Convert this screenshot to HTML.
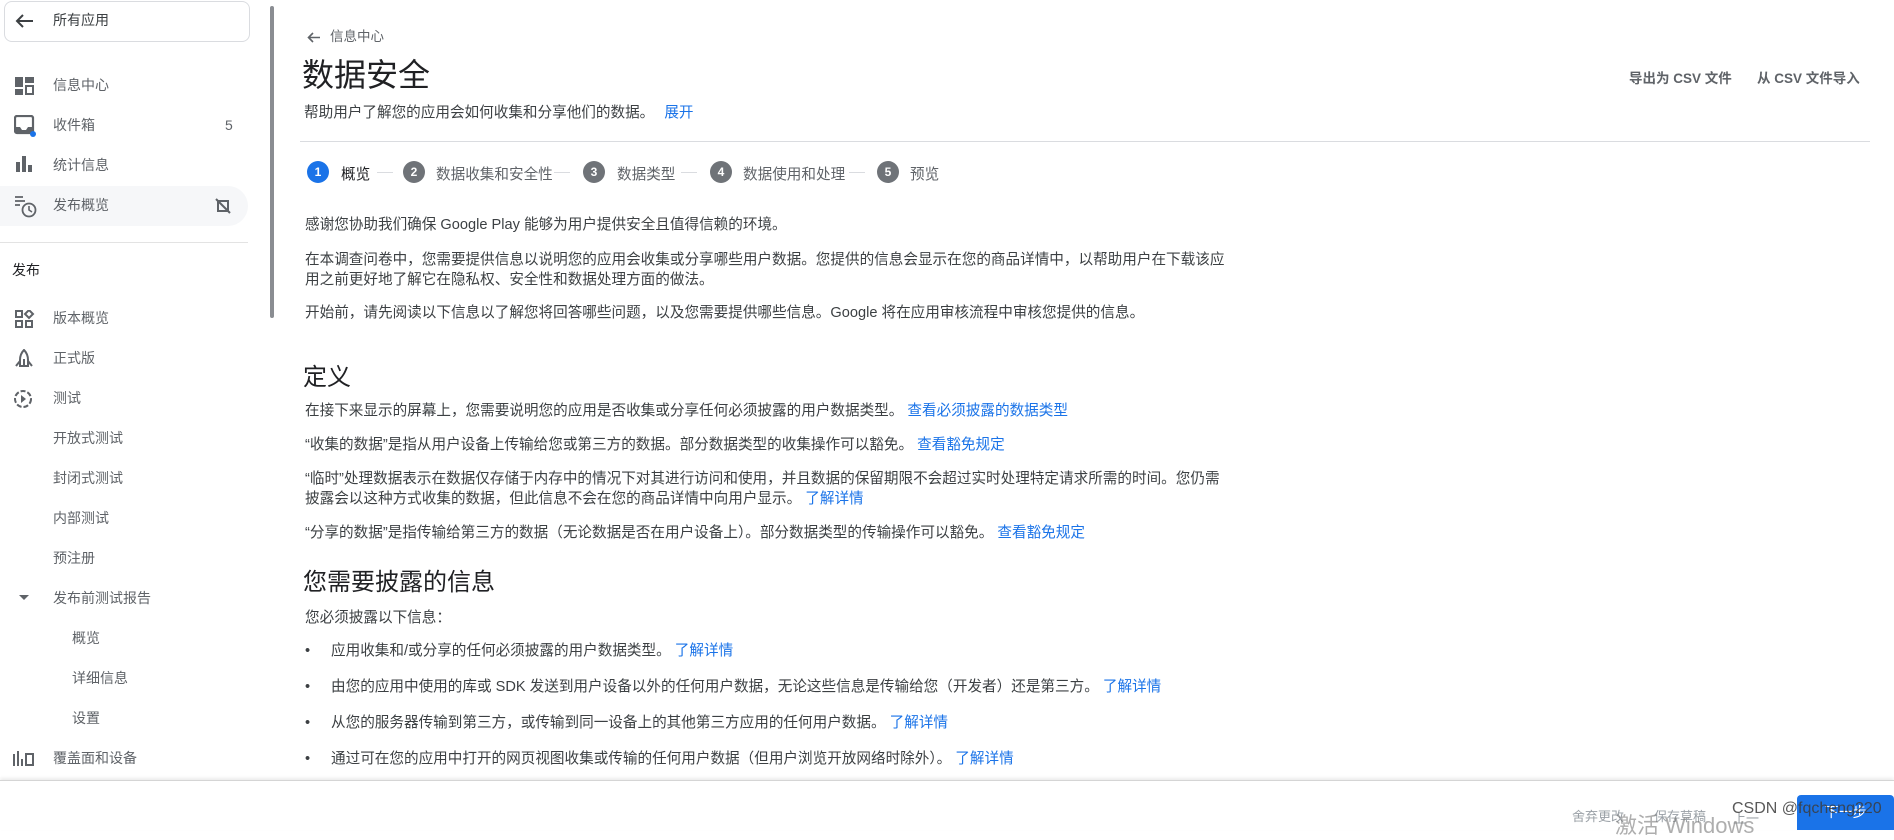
<!DOCTYPE html>
<html><head><meta charset="utf-8"><style>
*{margin:0;padding:0;box-sizing:border-box}
body{width:1894px;height:830px;overflow:hidden;background:#fff;font-family:"Liberation Sans","Noto Sans CJK SC",sans-serif;color:#3c4043;position:relative}
.a{position:absolute;white-space:nowrap}
.s{font-size:14px;color:#5f6368;line-height:18px}
.t{font-size:14.6px;color:#3c4043;line-height:18px}
.l{color:#1a73e8}
.ic{position:absolute}
.step{position:absolute;top:161px;width:22px;height:22px;border-radius:50%;background:#6f7378;color:#fff;font-size:12px;font-weight:bold;text-align:center;line-height:22px}
.sl{position:absolute;top:163px;font-size:14.6px;color:#5f6368}
.dash{position:absolute;top:172px;height:1px;width:16px;background:#dadce0}
</style></head><body>
<!-- sidebar -->
<div class="a" style="left:4px;top:1px;width:246px;height:41px;border:1px solid #dadce0;border-radius:8px"></div>
<svg class="ic" style="left:14px;top:13px" width="20" height="16" viewBox="0 0 20 16"><path d="M19 8H3M9 2L3 8l6 6" stroke="#3c4043" stroke-width="2" fill="none"/></svg>
<div class="a t" style="left:53px;top:11px;font-size:14px">所有应用</div>

<svg class="ic" style="left:15px;top:77px" width="20" height="18" viewBox="0 0 20 18"><rect x="0" y="0" width="8" height="10" fill="#5f6368"/><rect x="0" y="12" width="8" height="6" fill="#5f6368"/><rect x="10" y="0" width="9" height="6" fill="#5f6368"/><rect x="11" y="9" width="7" height="8" fill="none" stroke="#5f6368" stroke-width="2"/></svg>
<div class="a s" style="left:53px;top:76px">信息中心</div>
<svg class="ic" style="left:14px;top:115px" width="22" height="22" viewBox="0 0 22 22"><rect x="1" y="1" width="18" height="17" rx="2" fill="none" stroke="#5f6368" stroke-width="2.2"/><path d="M1 12h5l2 3h4l2-3h5v6H1z" fill="#5f6368"/><circle cx="19" cy="19" r="3" fill="#1a73e8"/></svg>
<div class="a s" style="left:53px;top:116px">收件箱</div>
<div class="a s" style="left:225px;top:116px">5</div>
<svg class="ic" style="left:16px;top:156px" width="18" height="16" viewBox="0 0 18 16"><rect x="0" y="6" width="4" height="10" fill="#5f6368"/><rect x="6" y="0" width="4" height="16" fill="#5f6368"/><rect x="12" y="9" width="4" height="7" fill="#5f6368"/></svg>
<div class="a s" style="left:53px;top:156px">统计信息</div>
<div class="a" style="left:0;top:186px;width:248px;height:40px;background:#f6f7f9;border-radius:0 20px 20px 0"></div>
<svg class="ic" style="left:14px;top:195px" width="24" height="24" viewBox="0 0 24 24"><path d="M1 2h8M1 6h10M1 10h5" stroke="#5f6368" stroke-width="1.8"/><circle cx="15" cy="15" r="6.5" fill="none" stroke="#5f6368" stroke-width="1.8"/><path d="M15 11v4l3 2" stroke="#5f6368" stroke-width="1.6" fill="none"/></svg>
<div class="a s" style="left:53px;top:196px">发布概览</div>
<svg class="ic" style="left:215px;top:198px" width="16" height="16" viewBox="0 0 16 16"><path d="M3 3h10v10H3z" fill="none" stroke="#5f6368" stroke-width="2"/><path d="M1 1l14 14" stroke="#5f6368" stroke-width="2"/></svg>
<div class="a" style="left:0;top:242px;width:248px;height:1px;background:#e3e3e3"></div>
<div class="a t" style="left:12px;top:261px;color:#202124;font-size:14px">发布</div>

<svg class="ic" style="left:15px;top:310px" width="20" height="18" viewBox="0 0 20 18"><rect x="1" y="1" width="6" height="6" fill="none" stroke="#5f6368" stroke-width="2"/><rect x="1" y="11" width="6" height="6" fill="none" stroke="#5f6368" stroke-width="2"/><rect x="11" y="11" width="6" height="6" fill="none" stroke="#5f6368" stroke-width="2"/><path d="M14 0l4 4-4 4-4-4z" fill="none" stroke="#5f6368" stroke-width="2"/></svg>
<div class="a s" style="left:53px;top:309px">版本概览</div>
<svg class="ic" style="left:15px;top:349px" width="18" height="18" viewBox="0 0 18 18"><path d="M9 1c3 3 4 6 4 10v6H5v-6C5 7 6 4 9 1zM1 17l4-5M17 17l-4-5M9 10v7" fill="none" stroke="#5f6368" stroke-width="2"/></svg>
<div class="a s" style="left:53px;top:349px">正式版</div>
<svg class="ic" style="left:13px;top:389px" width="20" height="20" viewBox="0 0 20 20"><circle cx="10" cy="10" r="8" fill="none" stroke="#5f6368" stroke-width="2" stroke-dasharray="5 2"/><path d="M8 6l5 4-5 4z" fill="#5f6368"/></svg>
<div class="a s" style="left:53px;top:389px">测试</div>
<div class="a s" style="left:53px;top:429px">开放式测试</div>
<div class="a s" style="left:53px;top:469px">封闭式测试</div>
<div class="a s" style="left:53px;top:509px">内部测试</div>
<div class="a s" style="left:53px;top:549px">预注册</div>
<svg class="ic" style="left:19px;top:595px" width="10" height="6" viewBox="0 0 10 6"><path d="M0 0h10L5 5z" fill="#5f6368"/></svg>
<div class="a s" style="left:53px;top:589px">发布前测试报告</div>
<div class="a s" style="left:72px;top:629px">概览</div>
<div class="a s" style="left:72px;top:669px">详细信息</div>
<div class="a s" style="left:72px;top:709px">设置</div>
<svg class="ic" style="left:13px;top:751px" width="22" height="15" viewBox="0 0 22 15"><rect x="0" y="3" width="2" height="12" fill="#5f6368"/><rect x="4" y="0" width="2" height="15" fill="#5f6368"/><rect x="8" y="8" width="2" height="7" fill="#5f6368"/><rect x="13" y="3" width="7" height="11" fill="none" stroke="#5f6368" stroke-width="2"/></svg>
<div class="a s" style="left:53px;top:749px">覆盖面和设备</div>
<div class="a" style="left:270px;top:6px;width:4px;height:312px;background:#8a8d92;border-radius:2px"></div>

<!-- main header -->
<svg class="ic" style="left:307px;top:32px" width="13" height="11" viewBox="0 0 13 11"><path d="M13 5.5H2M6 1L1.5 5.5 6 10" stroke="#5f6368" stroke-width="1.6" fill="none"/></svg>
<div class="a s" style="left:330px;top:28px;font-size:13.5px">信息中心</div>
<div class="a" style="left:302px;top:54px;font-size:32px;line-height:42px;color:#202124">数据安全</div>
<div class="a t" style="left:304px;top:104px">帮助用户了解您的应用会如何收集和分享他们的数据。 <span class="l" style="margin-left:6px">展开</span></div>
<div class="a s" style="left:1629px;top:70px;font-size:13.5px;font-weight:bold;color:#5f6368">导出为 CSV 文件</div>
<div class="a s" style="left:1757px;top:70px;font-size:13.5px;font-weight:bold;color:#5f6368">从 CSV 文件导入</div>
<div class="a" style="left:300px;top:141px;width:1570px;height:1px;background:#dadce0"></div>

<!-- stepper -->
<div class="step" style="left:307px;background:#1a73e8">1</div><div class="sl" style="left:341px;color:#202124">概览</div><div class="dash" style="left:377px"></div>
<div class="step" style="left:403px">2</div><div class="sl" style="left:436px">数据收集和安全性</div><div class="dash" style="left:554px"></div>
<div class="step" style="left:583px">3</div><div class="sl" style="left:617px">数据类型</div><div class="dash" style="left:681px"></div>
<div class="step" style="left:710px">4</div><div class="sl" style="left:743px">数据使用和处理</div><div class="dash" style="left:849px"></div>
<div class="step" style="left:877px">5</div><div class="sl" style="left:910px">预览</div>

<!-- body -->
<div class="a t" style="left:305px;top:216px">感谢您协助我们确保 Google Play 能够为用户提供安全且值得信赖的环境。</div>
<div class="a t" style="left:305px;top:251px">在本调查问卷中，您需要提供信息以说明您的应用会收集或分享哪些用户数据。您提供的信息会显示在您的商品详情中，以帮助用户在下载该应</div>
<div class="a t" style="left:305px;top:271px">用之前更好地了解它在隐私权、安全性和数据处理方面的做法。</div>
<div class="a t" style="left:305px;top:304px">开始前，请先阅读以下信息以了解您将回答哪些问题，以及您需要提供哪些信息。Google 将在应用审核流程中审核您提供的信息。</div>
<div class="a" style="left:303px;top:362px;font-size:24px;line-height:32px;color:#202124">定义</div>
<div class="a t" style="left:305px;top:402px">在接下来显示的屏幕上，您需要说明您的应用是否收集或分享任何必须披露的用户数据类型。 <span class="l">查看必须披露的数据类型</span></div>
<div class="a t" style="left:305px;top:436px">“收集的数据”是指从用户设备上传输给您或第三方的数据。部分数据类型的收集操作可以豁免。 <span class="l">查看豁免规定</span></div>
<div class="a t" style="left:305px;top:470px">“临时”处理数据表示在数据仅存储于内存中的情况下对其进行访问和使用，并且数据的保留期限不会超过实时处理特定请求所需的时间。您仍需</div>
<div class="a t" style="left:305px;top:490px">披露会以这种方式收集的数据，但此信息不会在您的商品详情中向用户显示。 <span class="l">了解详情</span></div>
<div class="a t" style="left:305px;top:524px">“分享的数据”是指传输给第三方的数据（无论数据是否在用户设备上）。部分数据类型的传输操作可以豁免。 <span class="l">查看豁免规定</span></div>
<div class="a" style="left:303px;top:567px;font-size:24px;line-height:32px;color:#202124">您需要披露的信息</div>
<div class="a t" style="left:305px;top:609px">您必须披露以下信息：</div>
<div class="a t" style="left:305px;top:642px">•</div><div class="a t" style="left:331px;top:642px">应用收集和/或分享的任何必须披露的用户数据类型。 <span class="l">了解详情</span></div>
<div class="a t" style="left:305px;top:678px">•</div><div class="a t" style="left:331px;top:678px">由您的应用中使用的库或 SDK 发送到用户设备以外的任何用户数据，无论这些信息是传输给您（开发者）还是第三方。 <span class="l">了解详情</span></div>
<div class="a t" style="left:305px;top:714px">•</div><div class="a t" style="left:331px;top:714px">从您的服务器传输到第三方，或传输到同一设备上的其他第三方应用的任何用户数据。 <span class="l">了解详情</span></div>
<div class="a t" style="left:305px;top:750px">•</div><div class="a t" style="left:331px;top:750px">通过可在您的应用中打开的网页视图收集或传输的任何用户数据（但用户浏览开放网络时除外）。 <span class="l">了解详情</span></div>

<!-- footer -->
<div class="a" style="left:0;top:780px;width:1894px;height:50px;background:#fff;border-top:1px solid #d5d5d5;box-shadow:0 -2px 3px rgba(0,0,0,0.08)"></div>
<div class="a" style="left:1572px;top:806px;font-size:13px;color:#9aa0a6">舍弃更改</div>
<div class="a" style="left:1654px;top:806px;font-size:13px;color:#9aa0a6">保存草稿</div>
<div class="a" style="left:1733px;top:808px;font-size:13px;color:#9aa0a6">上一</div>
<div class="a" style="left:1797px;top:795px;width:97px;height:35px;background:#1a73e8;border-radius:4px 4px 0 0;color:#fff;font-size:14px;text-align:center;line-height:35px">下一步</div>
<div class="a" style="left:1615px;top:808px;font-size:22px;color:rgba(120,120,120,0.6)">激活 Windows</div>
<div class="a" style="left:1732px;top:800px;font-size:16px;color:rgba(60,60,60,0.85)">CSDN @fqcheng220</div>
</body></html>
